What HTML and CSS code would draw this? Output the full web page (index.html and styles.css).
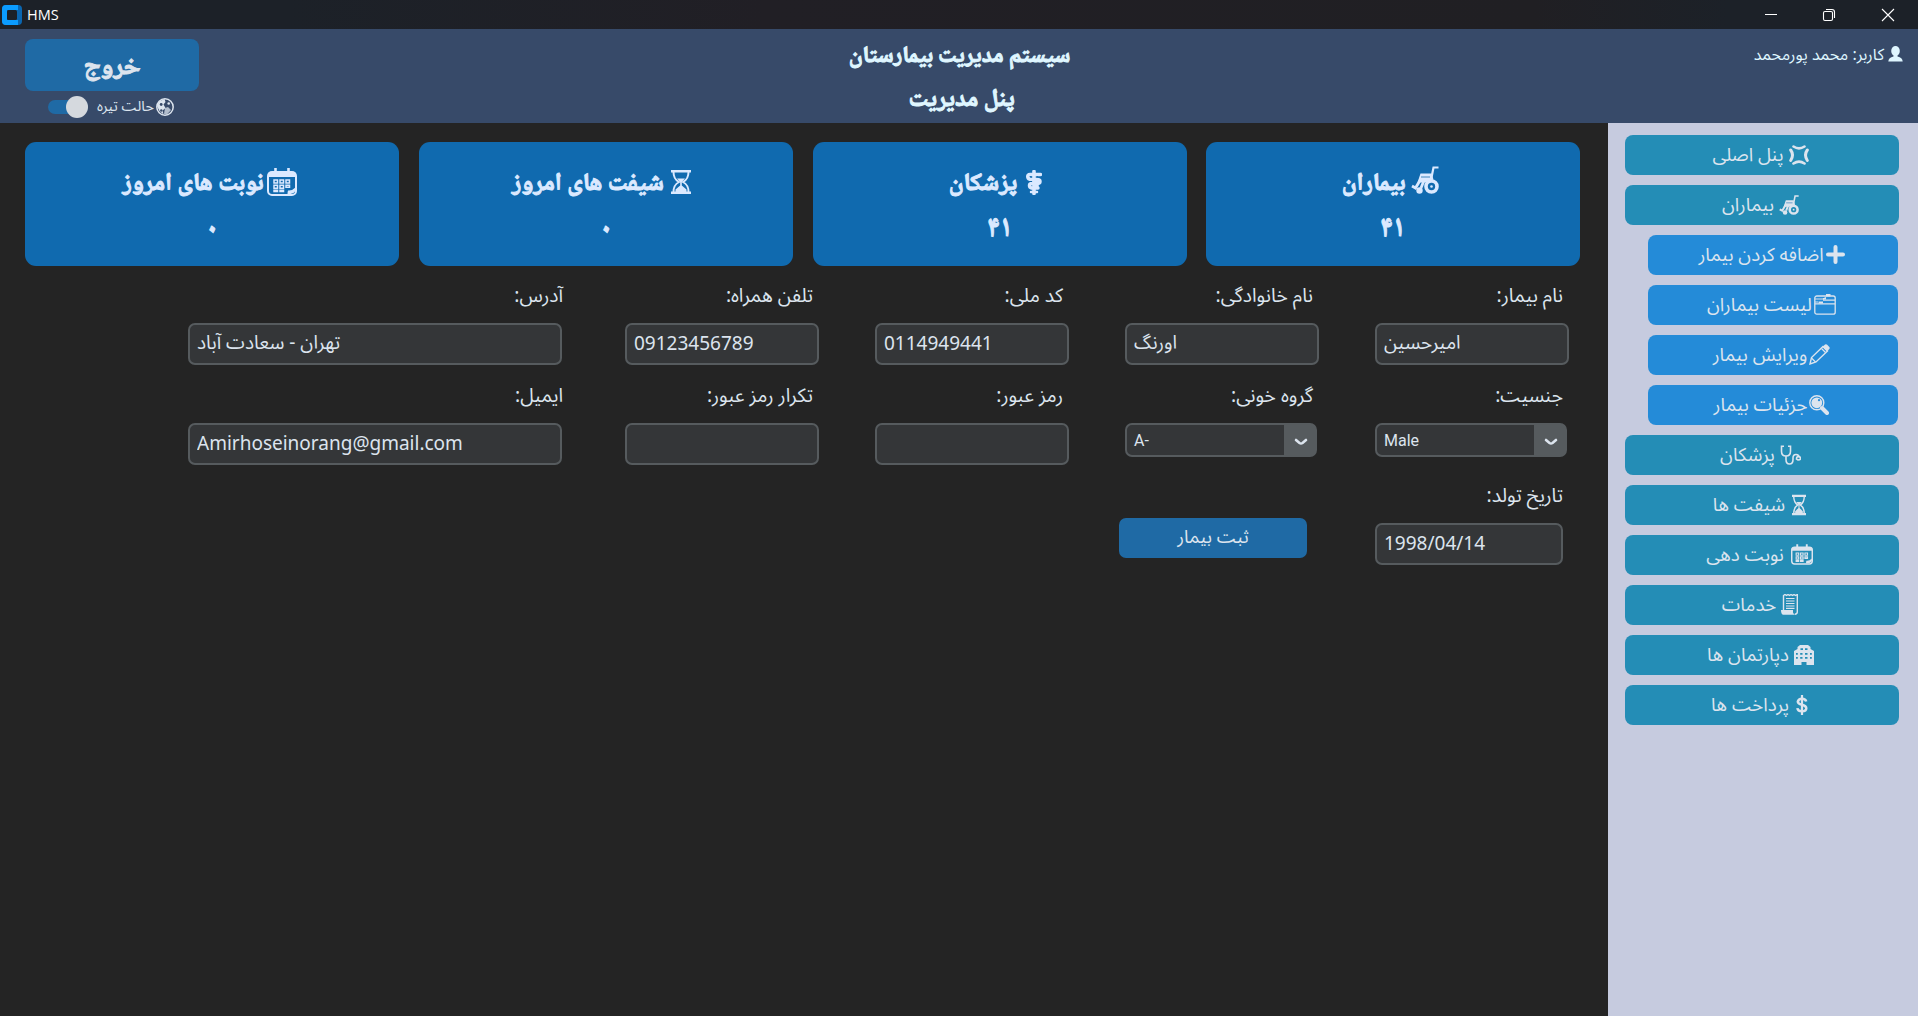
FILE: index.html
```html
<!DOCTYPE html>
<html lang="fa">
<head>
<meta charset="utf-8">
<title>HMS</title>
<link rel="stylesheet" href="styles.css">
</head>
<body>
<svg class="defs" width="0" height="0" aria-hidden="true">
  <symbol id="wheelchair" viewBox="0 0 28 28">
    <path d="M27.500 1.500h-5l-2.200 11" fill="none" stroke="currentColor" stroke-width="2.200"/>
    <path d="M9.500 7.500h11l2 6-6 3H6.500z" fill="currentColor"/>
    <path d="M10 11h9" stroke="#2a78b4" stroke-width=".9"/>
    <circle cx="20.500" cy="20.500" r="5.500" fill="none" stroke="currentColor" stroke-width="3.600"/>
    <circle cx="20.500" cy="20.500" r="1.300" fill="currentColor"/>
    <path d="M1 20l3.500 2L9 14.500h4L10 22" fill="none" stroke="currentColor" stroke-width="2.800"/>
    <circle cx="8.500" cy="24.500" r="3.200" fill="currentColor"/>
  </symbol>
  <symbol id="hourglass" viewBox="0 0 20 26">
    <path d="M0 1h20v2.500H0zM0 22.500h20V25H0z" fill="currentColor"/>
    <path d="M2.500 3c0 6 2 8 5.500 10-3.500 2-5.500 4-5.500 10M17.500 3c0 6-2 8-5.500 10 3.500 2 5.500 4 5.500 10" fill="none" stroke="currentColor" stroke-width="2"/>
    <path d="M6 9.500h8l-3.200 3.500v3.500l4.700 4V23h-11v-2.500l4.700-4V13z" fill="currentColor"/>
  </symbol>
  <symbol id="calendar" viewBox="0 0 30 28">
    <rect x="1" y="4" width="28" height="23" rx="4" fill="none" stroke="currentColor" stroke-width="2"/>
    <path d="M1 9V6q0-2 3-2h22q3 0 3 2v3z" fill="currentColor"/>
    <path d="M8.500 0v5M21.500 0v5" stroke="currentColor" stroke-width="2.600"/>
    <g fill="none" stroke="currentColor" stroke-width="1.500"><path d="M7 12h3.500v3H7zM13 12h3.500v3H13zM19 12h3.500v3H19zM7 17.300h3.500v3H7zM13 17.300h3.500v3H13zM19 17.300h3.500v2H19zM7 22.300h3.500v1.200H7zM13 22.300h3.500v1.200H13z"/></g>
    <path d="M20.500 26q0-2 .5-3.500 4 .5 7.500-3v3.500q-2 3-5 3z" fill="currentColor"/>
  </symbol>
  <symbol id="medical" viewBox="0 0 16 25">
    <path d="M8 1.500v22" stroke="currentColor" stroke-width="3.600" stroke-linecap="round"/>
    <path d="M14.500 4.500H4Q1.500 4.500 1.800 7t3.700 2.500H11q3 0 3 2T11 13.500H6q-2.500 0-2.500 2T5.500 18H12" fill="none" stroke="currentColor" stroke-width="3.500" stroke-linecap="round"/>
    <path d="M5 22h6" stroke="currentColor" stroke-width="2.500" stroke-linecap="round"/>
    <path d="M10.500 18v-7" stroke="currentColor" stroke-width="4.500"/>
    <path d="M4 6.800h1.500M11 6.800h1M4 11.500h2" stroke="#106aaf" stroke-width="1"/>
  </symbol>
  <symbol id="palette" viewBox="0 0 18 18">
    <circle cx="9" cy="9" r="8.200" fill="none" stroke="currentColor" stroke-width="1.500"/>
    <path d="M3 3.500L8.500 1l1 3-2 2.500 2 3.500-3 2.500 1 4-4-3.500L1 8z" fill="currentColor"/>
    <path d="M9 10l3-1 3 3-4 4.500L8 16z" fill="currentColor" opacity=".75"/>
    <g fill="#374a69"><circle cx="5.200" cy="6.500" r="1.400"/><circle cx="5.300" cy="12.500" r="1.200"/></g>
    <circle cx="12.700" cy="5.500" r="1.300" fill="currentColor"/>
  </symbol>
  <symbol id="person" viewBox="0 0 15 16">
    <ellipse cx="7.500" cy="5" rx="4.300" ry="5" fill="currentColor"/>
    <path d="M5.500 8h4v2.500q5 1 5.200 5H.3q.2-4 5.200-5z" fill="currentColor"/>
  </symbol>
  <symbol id="frame" viewBox="0 0 20 20">
    <g fill="none" stroke="currentColor" stroke-linecap="round"><path d="M4.500 1.500q5.500 3.800 11 0M4.500 18.500q5.500-3.800 11 0" stroke-width="2.600"/><path d="M1.700 5q3.600 5 0 10.500M18.300 5q-3.600 5 0 10.500" stroke-width="3"/></g>
  </symbol>
  <symbol id="plus" viewBox="0 0 19 19"><path d="M9.500 2v15M2 9.500h15" stroke="currentColor" stroke-width="4" stroke-linecap="round"/></symbol>
  <symbol id="card-box" viewBox="0 0 22 21">
    <rect x=".8" y="2" width="20.400" height="18.200" rx="2" fill="none" stroke="currentColor" stroke-width="1.300"/>
    <path d="M1 5h8l3-1.500M1 8h3M9 6.200h12M1 9.800h20" fill="none" stroke="currentColor" stroke-width="1.200"/>
    <path d="M12 0h4.500v2.500H12zM4.500 7.500h4.500v2H4.500zM9 4h3v1.500H9z" fill="currentColor"/>
  </symbol>
  <symbol id="pencil" viewBox="0 0 21 21">
    <path d="M1 20l1.500-6.500L14 2.500l4.500 4.500L7 18z" fill="none" stroke="currentColor" stroke-width="1.400"/>
    <path d="M13.500 3L16 .6q1.200-.8 2.200.2L20.300 3q.8 1 0 2L18 7.500z" fill="currentColor"/>
    <path d="M12.500 4.500l4 4M2.500 14l4 4" stroke="currentColor" stroke-width="1.200"/>
  </symbol>
  <symbol id="search" viewBox="0 0 20 20">
    <circle cx="7.800" cy="7.800" r="7" fill="none" stroke="currentColor" stroke-width="1.400"/>
    <circle cx="7.800" cy="7.800" r="5.400" fill="currentColor"/>
    <circle cx="10" cy="5.200" r="1.100" fill="#248bd8"/>
    <path d="M13 13l5 5" stroke="currentColor" stroke-width="4" stroke-linecap="round"/>
  </symbol>
  <symbol id="stethoscope" viewBox="0 0 21 20">
    <path d="M4 1.200H1.500v5Q1.500 11 6 11t4.500-4.800v-5H8M6 11v3.500q0 4.500 3.500 4.500t3.500-4.500V13q0-3.500 3-3.500t3.500 3.200M16.500 14q0-2.500 2-2.500t2 2q0 1.500-2.500 1.500z" fill="none" stroke="currentColor" stroke-width="1.600"/>
  </symbol>
  <symbol id="receipt" viewBox="0 0 18 21">
    <path d="M2.500 16V1.500l1.500-1 1.500 1 1.500-1 1.500 1 1.500-1 1.500 1 1.500-1 1.500 1 1.800-1V18q0 2-2.500 2.300" fill="none" stroke="currentColor" stroke-width="1.400"/>
    <path d="M5 4.500h8.500M5 7h8.500M5 9.500h8.500M5 12h8.500M5 14.300h8.500" stroke="currentColor" stroke-width="1.200"/>
    <path d="M0 16h12v2.500q1 2.500 3 2.200H2Q0 20 0 16z" fill="currentColor"/>
  </symbol>
  <symbol id="building" viewBox="0 0 20 20">
    <path d="M0 6l3.500-2V2L6 0h8l2.500 2v2L20 6v14h-7.500v-3h-5v3H0z" fill="currentColor"/>
    <path d="M6.500 3.200H9v1.800H6.500zM11 3.200h2.500v1.800H11zM2 8h1.800v1.800H2zM6.200 8h2.300v1.800H6.200zM11 8h2.500v1.800H11zM16 8h1.800v1.800H16zM2 12h1.800v1.800H2zM6.200 12h2.300v1.800H6.200zM11 12h2.500v1.800H11zM16 12h1.800v1.800H16z" fill="#248db6"/>
  </symbol>
  <symbol id="dollar" viewBox="0 0 12 20">
    <path d="M6 0v20" stroke="currentColor" stroke-width="2.200"/>
    <path d="M10.200 6.500Q9.500 3.700 6 3.700T1.800 6.600Q1.800 9 6 9.800t4.300 3.500q0 3-4.300 3t-4.600-3.100" fill="none" stroke="currentColor" stroke-width="2.500"/>
  </symbol>
</svg>

<div class="titlebar">
  <svg class="logo" viewBox="0 0 20 20">
    <rect width="20" height="20" rx="4" fill="#0a66b0"/>
    <path d="M4 0h12v5H5v10h11v5H4q-4 0-4-4V4q0-4 4-4z" fill="#0b9cff"/>
    <rect x="5" y="5" width="10" height="10" rx="1.500" fill="#1c2128"/>
  </svg>
  <span class="app-name">HMS</span>
  <svg class="win-buttons" viewBox="0 0 130 14" fill="none" stroke="#fff" stroke-width="1.100">
    <path d="M0 6.500h12M117 1l12 12M129 1l-12 12"/>
    <rect x="58.500" y="3.500" width="9" height="9" rx="1.500"/>
    <path d="M61 1.500h6q2.500 0 2.500 2.500v6"/>
  </svg>
</div>

<header class="header">
  <div class="header-left">
    <button class="logout">خروج</button>
    <div class="mode">
      <span class="toggle"><i></i></span>
      <span class="mode-label" dir="rtl"><svg width="18" height="18"><use href="#palette"/></svg><span>حالت تیره</span></span>
    </div>
  </div>
  <div class="titles" dir="rtl">
    <h1>سیستم مدیریت بیمارستان</h1>
    <h2>پنل مدیریت</h2>
  </div>
  <div class="user" dir="rtl"><svg width="15" height="16"><use href="#person"/></svg><span>کاربر: محمد پورمحمد</span></div>
</header>

<div class="body">
  <main class="main">
    <section class="cards">
      <article class="card" dir="rtl"><h3 class="g1"><svg width="30" height="28"><use href="#calendar"/></svg><span>نوبت های امروز</span></h3><p>۰</p></article>
      <article class="card" dir="rtl"><h3 class="g2"><svg width="20" height="26"><use href="#hourglass"/></svg><span>شیفت های امروز</span></h3><p>۰</p></article>
      <article class="card" dir="rtl"><h3 class="g3"><svg width="16" height="25"><use href="#medical"/></svg><span>پزشکان</span></h3><p>۴۱</p></article>
      <article class="card" dir="rtl"><h3 class="g4"><svg width="28" height="28"><use href="#wheelchair"/></svg><span>بیماران</span></h3><p>۴۱</p></article>
    </section>

    <form class="form">
      <div class="field long"><label dir="rtl">آدرس:</label><input value="تهران - سعادت آباد"></div>
      <div class="field"><label dir="rtl">تلفن همراه:</label><input value="09123456789"></div>
      <div class="field"><label dir="rtl">کد ملی:</label><input value="0114949441"></div>
      <div class="field"><label dir="rtl">نام خانوادگی:</label><input value="اورنگ"></div>
      <div class="field"><label dir="rtl">نام بیمار:</label><input value="امیرحسین"></div>

      <div class="field long"><label dir="rtl">ایمیل:</label><input value="Amirhoseinorang@gmail.com"></div>
      <div class="field"><label dir="rtl">تکرار رمز عبور:</label><input value=""></div>
      <div class="field"><label dir="rtl">رمز عبور:</label><input value=""></div>
      <div class="field"><label dir="rtl">گروه خونی:</label>
        <div class="select"><span>A-</span><b><svg width="14" height="8" viewBox="0 0 14 8"><path d="M2 2l3.500 3q1.500 1 3 0L12 2" fill="none" stroke="#dce4ee" stroke-width="2.600" stroke-linecap="round"/></svg></b></div></div>
      <div class="field"><label dir="rtl">جنسیت:</label>
        <div class="select"><span>Male</span><b><svg width="14" height="8" viewBox="0 0 14 8"><path d="M2 2l3.500 3q1.500 1 3 0L12 2" fill="none" stroke="#dce4ee" stroke-width="2.600" stroke-linecap="round"/></svg></b></div></div>

      <button class="submit" type="button">ثبت بیمار</button>
      <div class="field birth"><label dir="rtl">تاریخ تولد:</label><input value="1998/04/14"></div>
    </form>
  </main>

  <nav class="sidebar" dir="rtl">
    <a class="item"><svg width="20" height="20"><use href="#frame"/></svg><span>پنل اصلی</span></a>
    <a class="item"><svg width="20" height="20"><use href="#wheelchair"/></svg><span>بیماران</span></a>
    <a class="item sub"><svg width="19" height="19"><use href="#plus"/></svg><span>اضافه کردن بیمار</span></a>
    <a class="item sub"><svg width="22" height="21"><use href="#card-box"/></svg><span>لیست بیماران</span></a>
    <a class="item sub"><svg width="21" height="21"><use href="#pencil"/></svg><span>ویرایش بیمار</span></a>
    <a class="item sub"><svg width="20" height="20"><use href="#search"/></svg><span>جزئیات بیمار</span></a>
    <a class="item"><svg width="21" height="20"><use href="#stethoscope"/></svg><span>پزشکان</span></a>
    <a class="item wide"><svg width="14" height="22" viewBox="0 0 20 26" preserveAspectRatio="none"><use href="#hourglass" width="20" height="26"/></svg><span>شیفت ها</span></a>
    <a class="item wide"><svg width="22" height="21"><use href="#calendar"/></svg><span>نوبت دهی</span></a>
    <a class="item"><svg width="18" height="21"><use href="#receipt"/></svg><span>خدمات</span></a>
    <a class="item"><svg width="20" height="20"><use href="#building"/></svg><span>دپارتمان ها</span></a>
    <a class="item wide"><svg width="12" height="20"><use href="#dollar"/></svg><span>پرداخت ها</span></a>
  </nav>
</div>
</body>
</html>
```
FILE: styles.css
```css
* { box-sizing: border-box; margin: 0; }
body {
  width: 1918px; height: 1016px; overflow: hidden;
  display: flex; flex-direction: column;
  background: #242424; color: #dce4ee;
  font-family: "Noto Sans Arabic", "Noto Sans", sans-serif;
  font-size: 19px; white-space: nowrap;
}
svg { flex: none; display: block; }
.defs { position: absolute; }
button { border: 0; color: inherit; background: #1f6aa5; }

.titlebar {
  height: 29px; display: flex; align-items: center; padding: 0 19px 0 2px;
  background: linear-gradient(90deg, #1c2128, #1c2128 15%, #211f25 40%, #201f23 80%, #1c2128 90%);
}
.logo { width: 20px; height: 20px; }
.app-name { margin-left: 5px; font: 14.500px/28px "Open Sans", sans-serif; color: #fff; }
.win-buttons { width: 130px; height: 14px; margin-left: auto; margin-right: 4px; }

.header {
  height: 94px; background: #374a69;
  display: grid; grid-template-columns: 400px 1fr 400px;
}
.header-left { padding: 10px 0 0 25px; }
.logout { display: block; width: 174px; height: 52px; border-radius: 8px; font: 700 26px/52px "Noto Naskh Arabic", serif; padding: 3px 0 0; -webkit-text-stroke: 1px; }
.mode { display: flex; align-items: center; height: 32px; padding-left: 23px; gap: 9px; }
.toggle { width: 40px; height: 14px; border-radius: 7px; background: #1f6aa5; display: flex; justify-content: flex-end; align-items: center; }
.toggle i { flex: none; width: 22px; height: 22px; border-radius: 50%; background: #d5d9de; }
.mode-label { display: flex; align-items: center; gap: 2px; font-size: 14.500px; line-height: 30px; }
.titles { text-align: center; color: #dff6ff; padding: 6px 0 0 1px; }
.titles h1, .titles h2 { font: 700 23px/44px "Noto Naskh Arabic", serif; -webkit-text-stroke: 1px; }
.titles h2 { font-size: 24.500px; padding-left: 2px; margin-left: 2px; }
.user { display: flex; align-items: flex-start; gap: 4px; padding: 12px 0 0; margin-right: 15px; font-size: 16px; line-height: 28px; color: #dff6ff; }
.user svg { margin-top: 5px; }

.body { flex: 1; display: flex; }
.main { flex: 1; padding: 19px 28px 0 25px; }
.cards { display: grid; grid-template-columns: 374px 374px 373px 374px; column-gap: 20px; }
.card { width: 374px; height: 124px; border-radius: 11px; background: #106aaf; color: #dbe9ff; text-align: center; padding-top: 18px; font: 700 24.500px/44px "Noto Naskh Arabic", serif; -webkit-text-stroke: 1px; }
.card h3 { display: flex; justify-content: center; align-items: center; font: inherit; height: 44px; padding-right: 5px; }
.card h3 span { padding-top: 5px; }
.card p { height: 44px; padding-top: 3px; transform: scaleY(1.2); }
.card .g1 { gap: 3px; } .card .g2 { gap: 7px; padding-right: 9px; } .card .g3 { gap: 9px; padding-right: 9px; } .card .g4 { gap: 6px; }
.g4 svg { margin-top: -4px; }

.form { display: grid; grid-template-columns: 381px repeat(4, 194px); grid-auto-rows: 100px; column-gap: 56px; padding: 9px 0 0 163px; }
.field { display: flex; flex-direction: column; align-items: flex-start; }
.field label { width: 188px; height: 48px; line-height: 42px; font-size: 19.300px; }
.field.long label { width: 375px; }
input { width: 194px; height: 42px; border: 2px solid #565b5e; border-radius: 7px; background: #343638; color: #dce4ee; font: 19px "Noto Sans", "Noto Sans Arabic", sans-serif; padding: 0 7px 3px; outline: 0; }
.field.long input { width: 374px; }
.select { width: 192px; height: 34px; border: 2px solid #565b5e; border-radius: 7px; background: #343638; display: flex; font: 16px/32px Roboto, sans-serif; padding-left: 7px; justify-content: space-between; }
.select b { width: 31px; background: #565b5e; display: flex; align-items: center; justify-content: center; padding: 3px 0 0 2px; }
.submit { grid-column: 4; width: 188px; height: 40px; margin: 43px 0 0 -6px; border-radius: 7px; font: 18.500px/38px "Noto Sans Arabic", sans-serif; padding: 0; }
.birth { grid-column: 5; }
.birth input { width: 188px; }

.sidebar { width: 310px; background: #c6cbdf; display: flex; flex-direction: column; gap: 10px; padding: 12px 19px 0 17px; }
.item { height: 40px; border-radius: 8px; background: #248db6; display: flex; align-items: center; justify-content: center; gap: 5px; line-height: 38px; font-size: 18.700px; padding-right: 3px; }
.item svg { margin-top: -1px; }
.item.sub { width: 250px; margin-right: 1px; background: #248bd8; gap: 2px; padding-right: 3px; }
.item.wide { gap: 7px; padding-right: 5px; }
```
